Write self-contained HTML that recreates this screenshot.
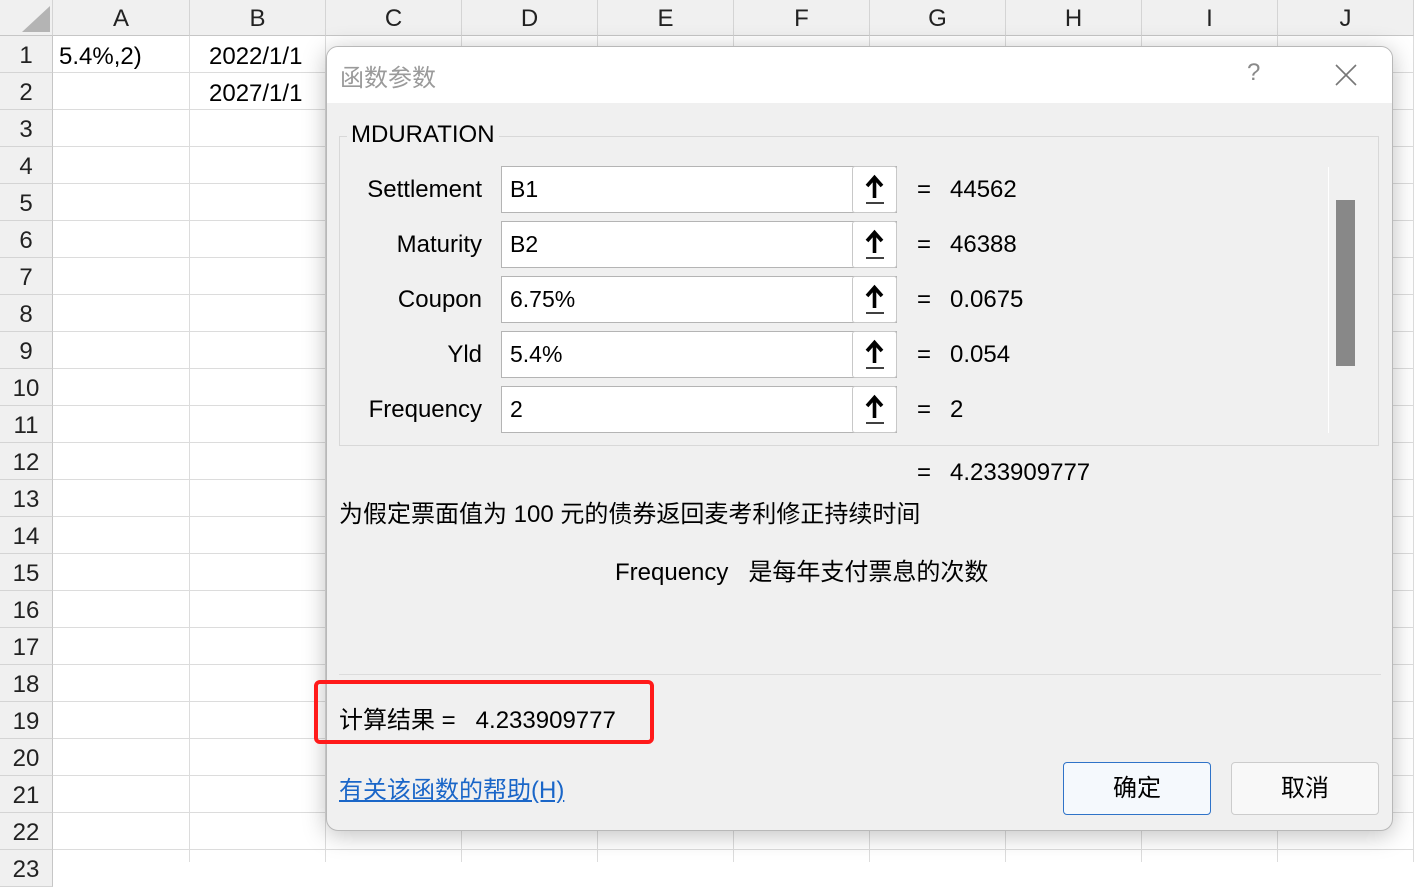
<!DOCTYPE html>
<html><head><meta charset="utf-8"><style>
*{margin:0;padding:0;box-sizing:border-box}
body{width:1414px;height:862px;overflow:hidden;background:#fff;font-family:"Liberation Sans","Noto Sans CJK SC",sans-serif;position:relative;color:#000}
.a{position:absolute;white-space:nowrap}
.col{position:absolute;top:0;height:36px;border-right:1px solid #d4d4d4;border-bottom:1px solid #c6c6c6;font-size:24px;text-align:center;line-height:38px;color:#222;background:#f0f0f0}
.row{position:absolute;left:0;width:53px;height:37px;border-bottom:1px solid #d4d4d4;border-right:1px solid #c6c6c6;font-size:24px;text-align:center;line-height:40px;background:#f0f0f0;color:#222}
.vl{position:absolute;top:36px;bottom:0;width:1px;background:#dcdcdc}
.hl{position:absolute;left:53px;right:0;height:1px;background:#dcdcdc}
.dlg{position:absolute;left:326px;top:46px;width:1067px;height:785px;background:#f0f0f0;border:1px solid #b8b8b8;border-radius:12px;box-shadow:0 4px 24px rgba(0,0,0,.25);overflow:hidden}
.lbl{font-size:24px;text-align:right;width:220px}
.inp{position:absolute;left:174px;width:396px;height:47px;background:#fff;border:1px solid #b4b4b4;font-size:23px;line-height:44px;padding-left:8px}
.btn{position:absolute;right:-1px;top:-1px;width:45px;height:47px;background:#fff;border:1px solid #c8c8c8;border-radius:3px}
.t{font-size:24px}
</style></head><body>
<div class="col" style="left:0;width:53px"></div>
<svg class="a" style="left:18px;top:6px" width="32" height="26"><polygon points="32,0 32,26 4,26" fill="#b4b4b4"/></svg>
<div class="col" style="left:53px;width:137px">A</div>
<div class="col" style="left:190px;width:136px">B</div>
<div class="col" style="left:326px;width:136px">C</div>
<div class="col" style="left:462px;width:136px">D</div>
<div class="col" style="left:598px;width:136px">E</div>
<div class="col" style="left:734px;width:136px">F</div>
<div class="col" style="left:870px;width:136px">G</div>
<div class="col" style="left:1006px;width:136px">H</div>
<div class="col" style="left:1142px;width:136px">I</div>
<div class="col" style="left:1278px;width:136px">J</div>
<div class="vl" style="left:189px"></div><div class="vl" style="left:325px"></div><div class="vl" style="left:461px"></div><div class="vl" style="left:597px"></div><div class="vl" style="left:733px"></div><div class="vl" style="left:869px"></div><div class="vl" style="left:1005px"></div><div class="vl" style="left:1141px"></div><div class="vl" style="left:1277px"></div><div class="vl" style="left:1413px"></div>
<div class="row" style="top:36px">1</div><div class="row" style="top:73px">2</div><div class="row" style="top:110px">3</div><div class="row" style="top:147px">4</div><div class="row" style="top:184px">5</div><div class="row" style="top:221px">6</div><div class="row" style="top:258px">7</div><div class="row" style="top:295px">8</div><div class="row" style="top:332px">9</div><div class="row" style="top:369px">10</div><div class="row" style="top:406px">11</div><div class="row" style="top:443px">12</div><div class="row" style="top:480px">13</div><div class="row" style="top:517px">14</div><div class="row" style="top:554px">15</div><div class="row" style="top:591px">16</div><div class="row" style="top:628px">17</div><div class="row" style="top:665px">18</div><div class="row" style="top:702px">19</div><div class="row" style="top:739px">20</div><div class="row" style="top:776px">21</div><div class="row" style="top:813px">22</div><div class="row" style="top:850px">23</div>
<div class="hl" style="top:72px"></div><div class="hl" style="top:109px"></div><div class="hl" style="top:146px"></div><div class="hl" style="top:183px"></div><div class="hl" style="top:220px"></div><div class="hl" style="top:257px"></div><div class="hl" style="top:294px"></div><div class="hl" style="top:331px"></div><div class="hl" style="top:368px"></div><div class="hl" style="top:405px"></div><div class="hl" style="top:442px"></div><div class="hl" style="top:479px"></div><div class="hl" style="top:516px"></div><div class="hl" style="top:553px"></div><div class="hl" style="top:590px"></div><div class="hl" style="top:627px"></div><div class="hl" style="top:664px"></div><div class="hl" style="top:701px"></div><div class="hl" style="top:738px"></div><div class="hl" style="top:775px"></div><div class="hl" style="top:812px"></div><div class="hl" style="top:849px"></div>
<div class="a" style="left:59px;top:43px;font-size:24px">5.4%,2)</div>
<div class="a" style="left:209px;top:43px;font-size:24px">2022/1/1</div>
<div class="a" style="left:209px;top:80px;font-size:24px">2027/1/1</div>

<div class="dlg">
 <div class="a" style="left:0;top:0;width:1067px;height:56px;background:#fff"></div>
 <div class="a" style="left:13px;top:11px;font-size:24px;color:#9a9a9a">函数参数</div>
 <div class="a" style="left:920px;top:12px;font-size:24px;color:#8a8a8a">?</div>
 <svg class="a" style="left:1008px;top:17px" width="22" height="22"><path d="M1 1L21 21M21 1L1 21" stroke="#777" stroke-width="1.6"/></svg>
 <div class="a" style="left:12px;top:89px;width:1040px;height:310px;border:1px solid #d8d8d8"></div>
 <div class="a t" style="left:20px;top:74px;background:#f0f0f0;padding:0 4px">MDURATION</div>
 <div class="a" style="left:1001px;top:120px;width:1px;height:266px;background:#fff"></div>
 <div class="a" style="left:1009px;top:153px;width:19px;height:166px;background:#888"></div>
 <div class="a" style="left:0;top:119px"><div class="a lbl" style="left:-65px;top:10px">Settlement</div><div class="inp">B1<div class="btn"><svg width="45" height="47"><path d="M21.5 31V11M14 19l7.5-8.5 7.5 8.5" stroke="#000" stroke-width="3.6" fill="none"/><path d="M13 36h18" stroke="#000" stroke-width="1.4"/></svg></div></div><div class="a t" style="left:590px;top:10px">=</div><div class="a t" style="left:623px;top:10px">44562</div></div>
 <div class="a" style="left:0;top:174px"><div class="a lbl" style="left:-65px;top:10px">Maturity</div><div class="inp">B2<div class="btn"><svg width="45" height="47"><path d="M21.5 31V11M14 19l7.5-8.5 7.5 8.5" stroke="#000" stroke-width="3.6" fill="none"/><path d="M13 36h18" stroke="#000" stroke-width="1.4"/></svg></div></div><div class="a t" style="left:590px;top:10px">=</div><div class="a t" style="left:623px;top:10px">46388</div></div>
 <div class="a" style="left:0;top:229px"><div class="a lbl" style="left:-65px;top:10px">Coupon</div><div class="inp">6.75%<div class="btn"><svg width="45" height="47"><path d="M21.5 31V11M14 19l7.5-8.5 7.5 8.5" stroke="#000" stroke-width="3.6" fill="none"/><path d="M13 36h18" stroke="#000" stroke-width="1.4"/></svg></div></div><div class="a t" style="left:590px;top:10px">=</div><div class="a t" style="left:623px;top:10px">0.0675</div></div>
 <div class="a" style="left:0;top:284px"><div class="a lbl" style="left:-65px;top:10px">Yld</div><div class="inp">5.4%<div class="btn"><svg width="45" height="47"><path d="M21.5 31V11M14 19l7.5-8.5 7.5 8.5" stroke="#000" stroke-width="3.6" fill="none"/><path d="M13 36h18" stroke="#000" stroke-width="1.4"/></svg></div></div><div class="a t" style="left:590px;top:10px">=</div><div class="a t" style="left:623px;top:10px">0.054</div></div>
 <div class="a" style="left:0;top:339px"><div class="a lbl" style="left:-65px;top:10px">Frequency</div><div class="inp">2<div class="btn"><svg width="45" height="47"><path d="M21.5 31V11M14 19l7.5-8.5 7.5 8.5" stroke="#000" stroke-width="3.6" fill="none"/><path d="M13 36h18" stroke="#000" stroke-width="1.4"/></svg></div></div><div class="a t" style="left:590px;top:10px">=</div><div class="a t" style="left:623px;top:10px">2</div></div>
 <div class="a t" style="left:590px;top:412px">=</div><div class="a t" style="left:623px;top:412px">4.233909777</div>
 <div class="a t" style="left:12px;top:447px">为假定票面值为 100 元的债券返回麦考利修正持续时间</div>
 <div class="a t" style="left:288px;top:505px">Frequency&nbsp;&nbsp; 是每年支付票息的次数</div>
 <div class="a" style="left:12px;top:627px;width:1042px;height:1px;background:#dcdcdc"></div>
 <div class="a t" style="left:12px;top:653px">计算结果 =&nbsp;&nbsp; 4.233909777</div>
 <div class="a t" style="left:12px;top:723px;color:#1a66c8;text-decoration:underline">有关该函数的帮助(H)</div>
 <div class="a" style="left:736px;top:715px;width:148px;height:53px;background:#f5f9fd;border:1px solid #2f73c8;border-radius:4px;font-size:24px;text-align:center;line-height:51px">确定</div>
 <div class="a" style="left:904px;top:715px;width:148px;height:53px;background:#f8f8f8;border:1px solid #ccc;border-radius:4px;font-size:24px;text-align:center;line-height:51px">取消</div>
</div>
<div class="a" style="left:314px;top:680px;width:340px;height:64px;border:4px solid #ff1a1a;border-radius:6px"></div>
</body></html>
